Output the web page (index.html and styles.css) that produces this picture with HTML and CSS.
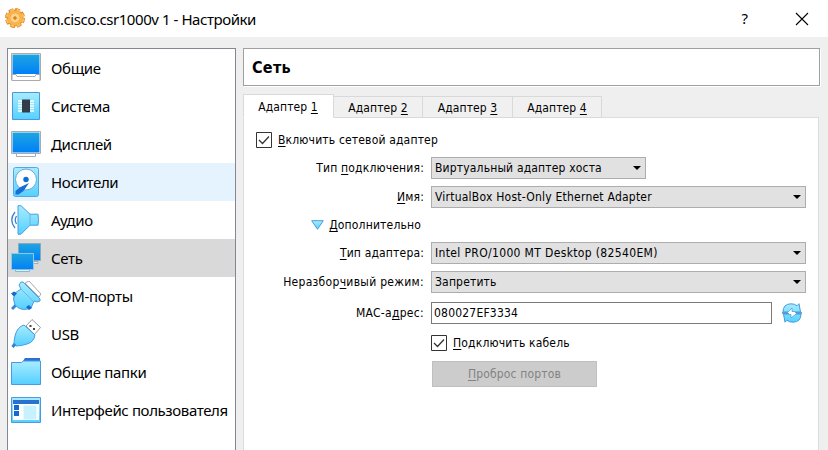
FILE: index.html
```html
<!DOCTYPE html>
<html lang="ru">
<head>
<meta charset="utf-8">
<title>com.cisco.csr1000v 1 - Настройки</title>
<link rel="stylesheet" href="styles.css">
</head>
<body>
<svg class="defs" width="0" height="0" aria-hidden="true">
  <defs>
    <linearGradient id="screen" x1="0" y1="0" x2="0" y2="1"><stop offset="0" stop-color="#1fa5e0"/><stop offset="1" stop-color="#0080f8"/></linearGradient>
    <linearGradient id="sky" x1="0" y1="0" x2="0" y2="1"><stop offset="0" stop-color="#a8ecff"/><stop offset="1" stop-color="#55d0ff"/></linearGradient>
    <radialGradient id="gold"><stop offset="0" stop-color="#ffd98a"/><stop offset="1" stop-color="#f8a93c"/></radialGradient>
  </defs>
</svg>
<header class="titlebar">
  <svg class="gear" width="22" height="22" viewBox="0 0 22 22">
    <circle cx="11" cy="11" r="8.500" fill="none" stroke="#d98530" stroke-width="3" stroke-dasharray="4.700 1.976"/>
    <circle cx="11" cy="11" r="8" fill="url(#gold)" stroke="#e28b2b"/>
    <circle cx="11" cy="11" r="8.300" fill="none" stroke="#ffbd55" stroke-width="2" stroke-dasharray="3.900 2.776" stroke-dashoffset="-.4"/>
    <circle cx="11" cy="11" r="5" fill="#ffd386" stroke="#f2a342" stroke-width=".8"/>
    <circle cx="11" cy="11" r="1.300" fill="#f3942b" stroke="#bb651a" stroke-width=".7"/>
  </svg>
  <h1 class="title">com.cisco.csr1000v 1 - Настройки</h1>
  <span class="help">?</span>
  <svg class="close" width="14" height="14" viewBox="0 0 14 14"><path d="M1 1l12 12M13 1L1 13" stroke="#000" stroke-width="1.1"/></svg>
</header>
<main class="dialog">
  <nav class="sidebar">
    <a class="item"><svg class="icon" viewBox="0 0 30 30"><path d="M.5 .5h29v26.500h-29z" fill="#fff" stroke="#a9abad"/><path d="M1.500 1.500h27v19.500h-27z" fill="url(#screen)"/><path d="M1 21.500h4l1 2h18l1-2h4v6h-28z" fill="#fff" stroke="#a9abad"/></svg><span>Общие</span></a>
    <a class="item"><svg class="icon" viewBox="0 0 30 30"><path d="M1.500 1.500h27v27h-27z" fill="url(#sky)" stroke="#4c96dc"/><path d="M7 10h16M7 12.500h16M7 15h16M7 17.500h16M7 20h16" stroke="#f7ffff" stroke-width="1.300"/><path d="M11 8.500h8v13h-8z" fill="#333d49"/></svg><span>Система</span></a>
    <a class="item"><svg class="icon" viewBox="0 0 30 30"><path d="M.5 2.500h29v22h-29z" fill="#fff" stroke="#a9abad"/><path d="M1.500 3.500h27v20h-27z" fill="url(#screen)"/><path d="M5.500 24.500h19v3h-19z" fill="#fff" stroke="#a9abad"/></svg><span>Дисплей</span></a>
    <a class="item hover"><svg class="icon" viewBox="0 0 30 30"><rect x="2.500" y=".5" width="25" height="29" rx="2" fill="url(#sky)" stroke="#5ba5df"/><circle cx="15" cy="12.500" r="10.500" fill="#fff" stroke="#66a9de"/><circle cx="15" cy="12.500" r="2.700" fill="#086fd9"/><path d="M18 16l-5.500 8-5 3.500H4.500V24l5-4z" fill="#176cd7"/></svg><span>Носители</span></a>
    <a class="item"><svg class="icon" viewBox="0 0 30 30"><path d="M7 .7h3l9 8.500h8q1 5.500 0 11h-8l-9 9H7z" fill="url(#sky)" stroke="#489fe0"/><path d="M19 9v12" stroke="#64b7e6"/><path d="M4 7Q-2.500 15 4 23M5.500 11Q3 15 5.500 19" fill="none" stroke="#377fd5" stroke-width="1.300"/></svg><span>Аудио</span></a>
    <a class="item selected"><svg class="icon" viewBox="0 0 30 30"><path d="M7.500.5h22v17h-22z" fill="url(#screen)" stroke="#8ca8ba"/><path d="M20 18.500h7v2h-5" fill="#e8eef2" stroke="#98aebb"/><path d="M.5 10.500h22v16h-22z" fill="url(#screen)" stroke="#8fc7e9"/><path d="M4.500 26.500h14v2h-14z" fill="#d9f3ff" stroke="#86b7d4"/></svg><span>Сеть</span></a>
    <a class="item"><svg class="icon" viewBox="0 0 30 30"><path d="M14 2l4-2 12 13-2 3z" fill="#fff" stroke="#a8a8a8"/><path d="M5 24l-4 4" stroke="#3487d8" stroke-width="3"/><path d="M10 1h2l17 17v2l-3 1-3-1-3 7Q10 31 4 24 1 18 4 12l6-4-2-4z" fill="url(#sky)" stroke="#479cdf"/><path d="M9 7l13 13" stroke="#69b9e9"/><path d="M0 12.500l3-2 3 2-3 3zM15 26l3-2 3 3-3 2z" fill="#1769ce"/></svg><span>COM-порты</span></a>
    <a class="item"><svg class="icon" viewBox="0 0 30 30"><path d="M15 7l6-6.500 8.500 8-6 7z" fill="#fff" stroke="#999"/><path d="M18.500 6h2v2h-2zM22 9h2v2h-2z" fill="#454545"/><path d="M13 6l11 10q-1 7-8 9-6 2-11 2l-2-2q0-4 1-8Q6 8 13 6z" fill="url(#sky)" stroke="#489bdf"/><path d="M4 25l-2.500 3" stroke="#2884d8" stroke-width="3"/></svg><span>USB</span></a>
    <a class="item"><svg class="icon" viewBox="0 0 30 30"><path d="M12 6V4l2-3h15v6z" fill="#2b70d2"/><path d="M.5 5.500h10l2-1.500h17v23.500H.5z" fill="url(#sky)" stroke="#489be0"/></svg><span>Общие папки</span></a>
    <a class="item wide"><svg class="icon" viewBox="0 0 30 30"><path d="M.5 2.500h29v25H.5z" fill="url(#sky)" stroke="#489be0"/><path d="M2 9h26v16H2z" fill="#fff"/><path d="M2 5h26v4H2z" fill="#2871cf"/><path d="M3 10h5v5H3zM3 16h5v5H3z" fill="#1769d2"/><path d="M12.500 10.500h13v14h-13z" fill="#c7f1fe"/></svg><span>Интерфейс пользователя</span></a>
  </nav>
  <section class="content">
    <h2 class="heading">Сеть</h2>
    <div class="tabs">
      <span class="tab active">Адаптер <u>1</u></span><span class="tab">Адаптер <u>2</u></span><span class="tab">Адаптер <u>3</u></span><span class="tab">Адаптер <u>4</u></span>
    </div>
    <div class="pane">
      <label class="check full"><svg class="box" viewBox="0 0 16 16"><path d="M.5.5h15v15H.5z" fill="#fff" stroke="#333"/><path d="M3 8l3.500 3.500 6.500-7" fill="none" stroke="#333" stroke-width="1.300"/></svg><span><u>В</u>ключить сетевой адаптер</span></label>
      <span class="label">Тип <u>п</u>одключения:</span><div class="select short"><span>Виртуальный адаптер хоста</span></div>
      <span class="label"><u>И</u>мя:</span><div class="select"><span class="name">VirtualBox Host-Only Ethernet Adapter</span></div>
      <span class="label more"><svg width="13" height="10" viewBox="0 0 13 10"><path d="M.7.7h11.600L6.500 9.300z" fill="url(#sky)" stroke="#489cdd"/></svg><span><u>Д</u>ополнительно</span></span><span></span>
      <span class="label"><u>Т</u>ип адаптера:</span><div class="select"><span class="model">Intel PRO/1000 MT Desktop (82540EM)</span></div>
      <span class="label mode">Неразбор<u>ч</u>ивый режим:</span><div class="select"><span>Запретить</span></div>
      <span class="label mode">MAC-а<u>д</u>рес:</span>
      <div class="mac"><div class="input">080027EF3334</div><svg width="20" height="20" viewBox="0 0 20 20"><path d="M1 9Q1 1 9 .8q4 0 6 2L17 .7l1.500 8.300zM19 11q0 8-8 8.200-4 0-6-2l-2 2L1.500 11z" fill="url(#sky)" stroke="#459bd8"/><path d="M0 10h20" stroke="#398ccb" stroke-width="1.500"/><path d="M10 5L5.500 9.500l2 2H9V15l5.500-4.500-2-2H10z" fill="#fff" stroke="#439bd8" stroke-width=".7"/></svg></div>
      <span></span><label class="check"><svg class="box" viewBox="0 0 16 16"><path d="M.5.5h15v15H.5z" fill="#fff" stroke="#333"/><path d="M3 8l3.500 3.500 6.500-7" fill="none" stroke="#333" stroke-width="1.300"/></svg><span><u>П</u>одключить кабель</span></label>
      <span></span><div class="button"><span><u>П</u>роброс портов</span></div>
    </div>
  </section>
</main>
</body>
</html>
```
FILE: styles.css
```css
* { box-sizing: border-box; }
body {
  margin: 0;
  height: 450px;
  overflow: hidden;
  display: flex;
  flex-direction: column;
  background: #efefef;
  color: #000;
  font: 12px "DejaVu Sans Condensed", "DejaVu Sans", sans-serif;
  font-stretch: condensed;
}
.defs { display: block; position: absolute; }
u { text-decoration-thickness: 1px; text-underline-offset: 2px; }
.titlebar {
  flex: none;
  height: 37px;
  padding: 0 19px 0 4px;
  display: flex;
  align-items: center;
  background: #fff;
}
.gear { margin-top: -2px; }
.title {
  margin: 0 auto 0 5px;
  font: 15px "Noto Sans", sans-serif;
  letter-spacing: -0.44px;
  white-space: nowrap;
}
.help { font: 15px "Noto Sans", sans-serif; margin: -2px 47px 0 0; }
.dialog {
  flex: 1;
  min-height: 0;
  display: flex;
  gap: 7px;
  padding: 11px 8px 0 7px;
}
.sidebar {
  flex: none;
  width: 229px;
  border: 1px solid #828790;
  border-bottom: 0;
  background: #fff;
}
.item {
  height: 38px;
  padding-left: 3px;
  display: flex;
  align-items: center;
  gap: 10px;
  font: 15px "Noto Sans", sans-serif;
  letter-spacing: -0.33px;
  white-space: nowrap;
}
.wide { letter-spacing: -0.38px; }
.hover { background: #e5f3ff; }
.selected { background: #d9d9d9; }
.icon { flex: none; width: 30px; height: 30px; }
.content { flex: 1; min-width: 0; display: flex; flex-direction: column; }
.heading {
  flex: none;
  margin: 0;
  height: 38px;
  padding-left: 8px;
  border: 1px solid #a0a0a0;
  box-shadow: 1px 1px #fff;
  background: #fff;
  font: bold 16px/38px "DejaVu Sans Condensed", sans-serif;
  font-stretch: condensed;
  letter-spacing: 0.3px;
}
.tabs {
  display: flex;
  align-items: flex-end;
  height: 24px;
  margin-top: 8px;
  margin-bottom: -1px;
}
.tab {
  position: relative;
  width: 90px;
  height: 22px;
  border: 1px solid #d9d9d9;
  border-left: 0;
  background: #f0f0f0;
  line-height: 22px;
  letter-spacing: 0.12px;
  text-align: center;
}
.tab:nth-child(2), .tab:nth-child(4) { width: 89px; }
.tab.active {
  width: 91px;
  height: 24px;
  padding-right: 1px;
  border-left: 1px solid #d9d9d9;
  border-bottom-color: #fff;
  background: #fff;
  line-height: 24px;
}
.pane {
  flex: 1;
  margin-right: 1px;
  padding: 8px 12px 0;
  border: 1px solid #dcdcdc;
  border-bottom: 0;
  background: #fff;
  display: grid;
  grid-template-columns: 168px 375px;
  grid-template-rows: 28px 28px 30px 26px 30px 28px 34px 26px 36px;
  column-gap: 7px;
  align-content: start;
  align-items: center;
  letter-spacing: 0.17px;
  white-space: nowrap;
}
.full { grid-column: 1 / -1; }
.check { display: flex; align-items: center; gap: 6px; }
.box { flex: none; width: 16px; height: 16px; }
.label { text-align: right; }
.mode { letter-spacing: 0.3px; }
.more { display: flex; align-items: center; justify-content: flex-end; gap: 5px; padding-right: 3px; }
.select {
  height: 22px;
  padding: 0 4px 0 3px;
  border: 1px solid #adadad;
  background: #e1e1e1;
  display: flex;
  align-items: center;
  justify-content: space-between;
}
.select::after {
  content: "";
  border: 4px solid transparent;
  border-top-color: #000;
  border-bottom: 0;
}
.name { letter-spacing: 0.23px; }
.model { letter-spacing: 0.35px; }
.short { width: 215px; }
.mac { display: flex; align-items: center; gap: 10px; }
.input {
  width: 341px;
  height: 22px;
  padding-left: 2px;
  border: 1px solid #7a7a7a;
  line-height: 21px;
  letter-spacing: 0.2px;
}
.button {
  width: 165px;
  height: 26px;
  margin-left: 1px;
  border: 1px solid #bfbfbf;
  background: #ccc;
  color: #838383;
  text-align: center;
  line-height: 25px;
}
```
